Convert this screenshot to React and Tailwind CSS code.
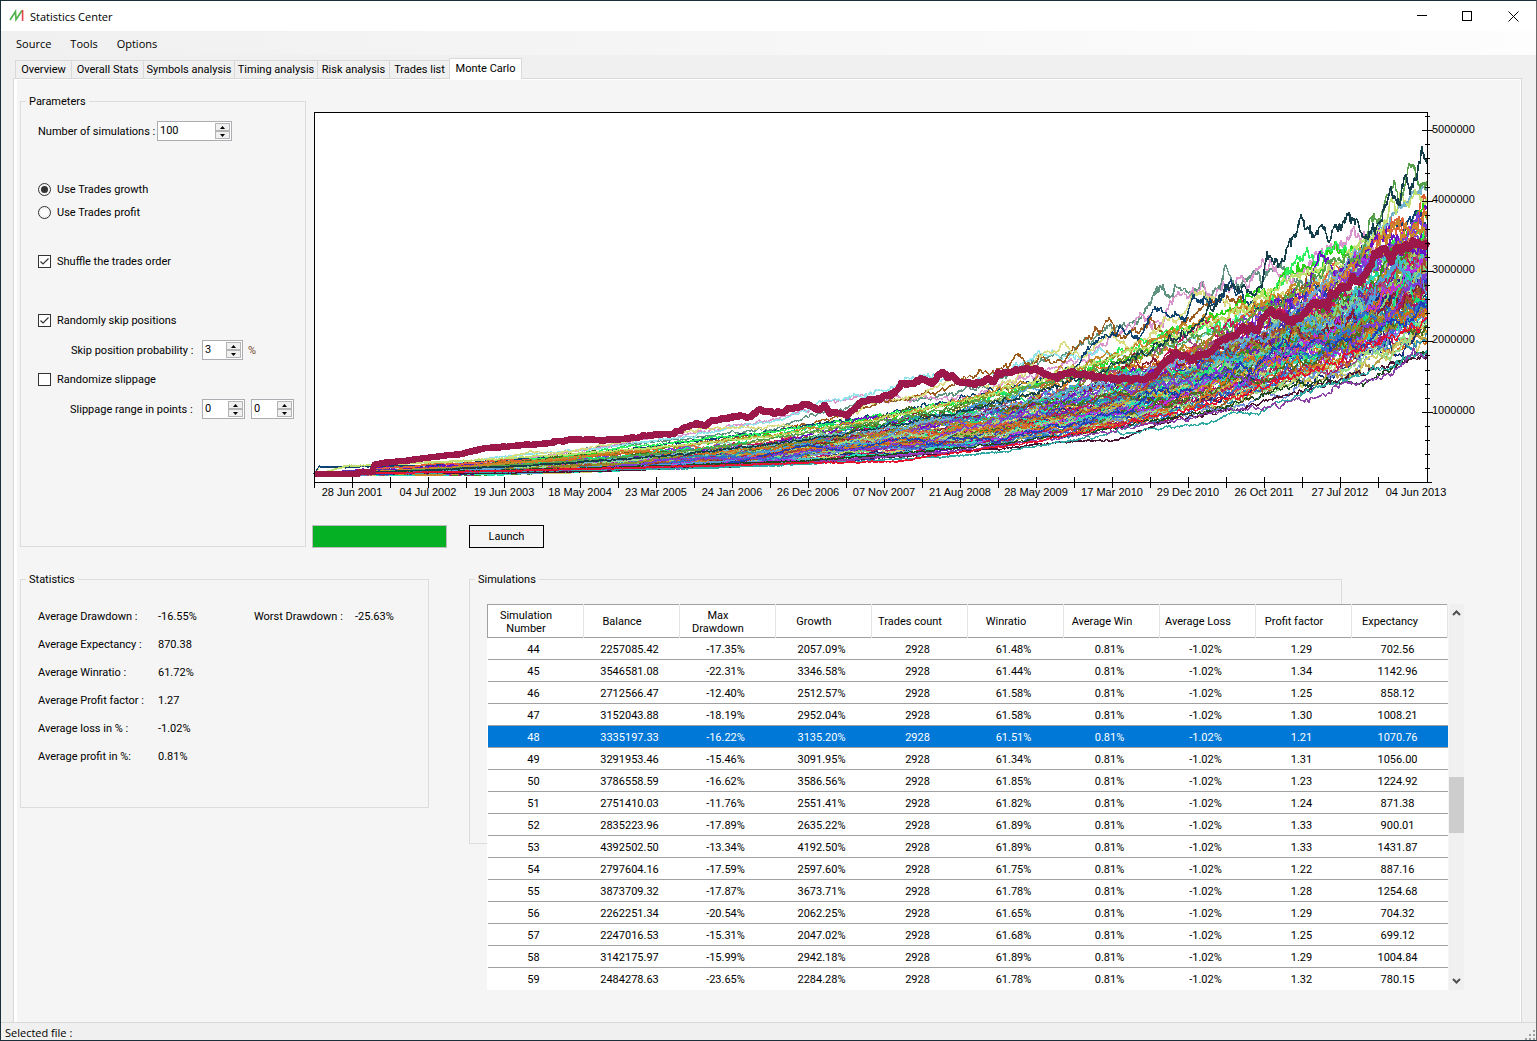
// src/pages/StatisticsCenter.jsx
// Statistics window, Monte Carlo tab

import { useMemo, useState } from "react";

const MENUS = ["Source", "Tools", "Options"];

const TABS = [
  { name: "Overview", width: "w-[57px]" },
  { name: "Overall Stats", width: "w-[73px]" },
  { name: "Symbols analysis", width: "w-[92px]" },
  { name: "Timing analysis", width: "w-[84px]" },
  { name: "Risk analysis", width: "w-[73px]" },
  { name: "Trades list", width: "w-[61px]" },
  { name: "Monte Carlo", width: "w-[73px]" },
];

const COLUMNS = [
  "Simulation Number",
  "Balance",
  "Max Drawdown",
  "Growth",
  "Trades count",
  "Winratio",
  "Average Win",
  "Average Loss",
  "Profit factor",
  "Expectancy",
];

const SIMULATIONS = [
  [44, "2257085.42", "-17.35%", "2057.09%", "61.48%", "1.29", "702.56"],
  [45, "3546581.08", "-22.31%", "3346.58%", "61.44%", "1.34", "1142.96"],
  [46, "2712566.47", "-12.40%", "2512.57%", "61.58%", "1.25", "858.12"],
  [47, "3152043.88", "-18.19%", "2952.04%", "61.58%", "1.30", "1008.21"],
  [48, "3335197.33", "-16.22%", "3135.20%", "61.51%", "1.21", "1070.76"],
  [49, "3291953.46", "-15.46%", "3091.95%", "61.34%", "1.31", "1056.00"],
  [50, "3786558.59", "-16.62%", "3586.56%", "61.85%", "1.23", "1224.92"],
  [51, "2751410.03", "-11.76%", "2551.41%", "61.82%", "1.24", "871.38"],
  [52, "2835223.96", "-17.89%", "2635.22%", "61.89%", "1.33", "900.01"],
  [53, "4392502.50", "-13.34%", "4192.50%", "61.89%", "1.33", "1431.87"],
  [54, "2797604.16", "-17.59%", "2597.60%", "61.75%", "1.22", "887.16"],
  [55, "3873709.32", "-17.87%", "3673.71%", "61.78%", "1.28", "1254.68"],
  [56, "2262251.34", "-20.54%", "2062.25%", "61.65%", "1.29", "704.32"],
  [57, "2247016.53", "-15.31%", "2047.02%", "61.68%", "1.25", "699.12"],
  [58, "3142175.97", "-15.99%", "2942.18%", "61.89%", "1.29", "1004.84"],
  [59, "2484278.63", "-23.65%", "2284.28%", "61.78%", "1.32", "780.15"],
];

const STATISTICS = [
  ["Average Drawdown :", "-16.55%", "Worst Drawdown :", "-25.63%"],
  ["Average Expectancy :", "870.38"],
  ["Average Winratio :", "61.72%"],
  ["Average Profit factor :", "1.27"],
  ["Average loss in % :", "-1.02%"],
  ["Average profit in %:", "0.81%"],
];

const DATES = [
  "28 Jun 2001",
  "04 Jul 2002",
  "19 Jun 2003",
  "18 May 2004",
  "23 Mar 2005",
  "24 Jan 2006",
  "26 Dec 2006",
  "07 Nov 2007",
  "21 Aug 2008",
  "28 May 2009",
  "17 Mar 2010",
  "29 Dec 2010",
  "26 Oct 2011",
  "27 Jul 2012",
  "04 Jun 2013",
];

// ─── Equity curves ───────────────────────────────────────────────

const LEFT = 314;
const RIGHT = 1427;
const BASE = 482;
// samples per pixel column
const DENSITY = 2;
const STEPS = (RIGHT - LEFT) * DENSITY;

// Runs that leave the pack, as [x, y] points
const OUTLIERS = [
  { color: "#5f927f", points: [[314, 474], [600, 447], [733, 433], [767, 430], [808, 417], [867, 402], [907, 400], [960, 392], [1000, 380], [1040, 360], [1067, 352], [1087, 342], [1113, 330], [1140, 317], [1148, 303], [1157, 290], [1167, 295], [1178, 287], [1190, 292], [1203, 283], [1208, 297], [1220, 287], [1227, 267], [1233, 285], [1247, 283], [1263, 278], [1280, 260], [1287, 273], [1310, 285], [1363, 262], [1427, 255]] },
  { color: "#d993cd", points: [[314, 474], [500, 461], [640, 440], [700, 433], [750, 423], [770, 420], [808, 411], [833, 400], [860, 398], [880, 400], [967, 397], [1047, 370], [1087, 357], [1120, 332], [1143, 315], [1163, 323], [1177, 297], [1203, 285], [1213, 295], [1240, 283], [1263, 262], [1280, 273], [1293, 280], [1313, 263], [1333, 247], [1352, 232], [1363, 240], [1380, 253], [1427, 243]] },
  { color: "#8fe3ea", points: [[314, 474], [500, 457], [600, 448], [700, 434], [767, 422], [800, 413], [823, 402], [850, 398], [880, 392], [913, 377], [930, 373], [943, 380], [973, 382], [1007, 370], [1037, 355], [1053, 352], [1073, 357], [1100, 352], [1130, 358], [1200, 335], [1300, 290], [1380, 262], [1427, 235]] },
  { color: "#9c5b1c", points: [[314, 474], [500, 464], [700, 443], [833, 418], [887, 400], [940, 390], [980, 373], [1000, 370], [1020, 355], [1030, 363], [1040, 357], [1063, 362], [1080, 342], [1097, 335], [1112, 322], [1123, 338], [1153, 320], [1170, 337], [1190, 317], [1220, 297], [1262, 312], [1313, 277], [1340, 300], [1427, 260]] },
  { color: "#d9dc7e", points: [[314, 474], [320, 467], [500, 459], [530, 452], [560, 453], [600, 446], [670, 433], [727, 427], [800, 427], [833, 423], [867, 403], [917, 397], [953, 377], [1000, 388], [1047, 353], [1065, 345], [1083, 357], [1097, 343], [1112, 332], [1123, 345], [1147, 338], [1167, 318], [1180, 320], [1193, 300], [1227, 300], [1237, 313], [1263, 293], [1293, 292], [1360, 262], [1427, 240]] },
  { color: "#0f4372", points: [[314, 474], [319, 467], [420, 466], [700, 440], [900, 411], [1073, 370], [1087, 350], [1113, 330], [1140, 337], [1158, 307], [1167, 313], [1183, 317], [1193, 298], [1203, 305], [1227, 288], [1240, 296], [1262, 310], [1327, 287], [1350, 262], [1380, 233], [1400, 217], [1427, 217]] },
  { color: "#2ad414", points: [[314, 474], [600, 453], [830, 426], [1040, 384], [1140, 353], [1170, 337], [1213, 317], [1247, 297], [1267, 293], [1297, 267], [1320, 267], [1337, 247], [1357, 260], [1380, 254], [1410, 236], [1423, 208], [1427, 212]] },
  { color: "#2df05f", points: [[314, 474], [620, 448], [850, 421], [1060, 378], [1173, 330], [1227, 325], [1270, 297], [1297, 260], [1307, 248], [1317, 263], [1345, 240], [1357, 257], [1390, 250], [1427, 227]] },
  { color: "#c8892b", points: [[314, 474], [620, 452], [850, 423], [1060, 372], [1173, 331], [1270, 302], [1340, 276], [1387, 232], [1400, 220], [1412, 232], [1427, 222]] },
  { color: "#72b2cc", points: [[314, 474], [800, 440], [1100, 383], [1263, 333], [1320, 290], [1350, 262], [1373, 227], [1385, 230], [1393, 213], [1400, 207], [1413, 200], [1427, 192]] },
  { color: "#bfe06e", points: [[314, 474], [346, 466], [420, 463], [800, 432], [1100, 361], [1220, 320], [1290, 282], [1367, 243], [1387, 217], [1392, 197], [1397, 210], [1402, 193], [1407, 203], [1413, 192], [1427, 197]] },
  { color: "#56a04c", points: [[314, 474], [800, 434], [1100, 368], [1263, 312], [1337, 263], [1360, 253], [1372, 215], [1382, 223], [1390, 200], [1395, 188], [1400, 197], [1408, 175], [1413, 173], [1420, 180], [1427, 170]] },
  { color: "#153f4b", points: [[314, 474], [800, 440], [1100, 372], [1187, 333], [1227, 292], [1253, 290], [1262, 282], [1267, 258], [1283, 257], [1293, 233], [1307, 225], [1313, 233], [1322, 227], [1330, 235], [1343, 225], [1351, 217], [1365, 242], [1382, 217], [1395, 185], [1400, 197], [1406, 177], [1410, 188], [1417, 170], [1422, 148], [1427, 167]] },
  { color: "#1d4a1d", points: [[314, 474], [800, 461], [1100, 430], [1230, 405], [1297, 383], [1363, 382], [1393, 363], [1413, 355], [1427, 353]] },
  { color: "#4a1233", points: [[314, 474], [560, 472], [800, 463], [970, 451], [1080, 440], [1113, 442], [1133, 435], [1150, 428], [1173, 420], [1230, 410], [1330, 382], [1400, 362], [1427, 356]] },
  { color: "#2fa7a2", points: [[314, 474], [700, 468], [933, 457], [973, 455], [1033, 447], [1113, 433], [1137, 432], [1167, 427], [1190, 426], [1220, 420], [1233, 412], [1260, 413], [1267, 407], [1283, 400], [1330, 384], [1427, 350]] },
  { color: "#8a3fa8", points: [[314, 474], [800, 463], [1100, 432], [1230, 410], [1280, 407], [1297, 395], [1310, 402], [1337, 387], [1380, 377], [1400, 370], [1408, 358], [1427, 352]] },
  { color: "#e6102f", points: [[314, 474], [800, 463], [900, 461], [930, 456], [1100, 428], [1300, 375], [1427, 320]] },
];

// The run picked in the table
const SELECTED_POINTS = [
  [314, 474], [358, 474], [360, 472], [373, 472], [374, 465], [388, 462], [413, 460], [433, 457],
  [467, 453], [483, 448], [507, 446], [540, 444], [580, 439], [600, 441], [620, 439], [657, 434],
  [673, 434], [687, 426], [707, 424], [713, 420], [733, 416], [750, 417], [758, 410], [780, 413],
  [800, 406], [808, 404], [815, 409], [825, 407], [830, 413], [847, 415], [863, 402], [883, 397],
  [895, 392], [903, 384], [913, 383], [920, 378], [932, 383], [942, 373], [952, 375], [962, 383],
  [975, 385], [983, 381], [995, 380], [998, 374], [1010, 372], [1040, 368], [1050, 377], [1070, 373],
  [1087, 374], [1093, 377], [1113, 378], [1143, 380], [1157, 375], [1163, 363], [1177, 355], [1190, 359],
  [1210, 352], [1223, 340], [1237, 335], [1243, 328], [1258, 331], [1263, 318], [1272, 309], [1287, 319],
  [1300, 317], [1313, 303], [1328, 303], [1333, 290], [1348, 288], [1353, 280], [1363, 278], [1373, 257],
  [1383, 253], [1393, 258], [1400, 250], [1413, 244], [1427, 247],
];

const PALETTE = [
  "#1f3fb8", "#6a13c4", "#2f6fc9", "#3fc1c9", "#c8892b", "#3d8f1d", "#b01a5b", "#7a3fd1", "#23e0b4", "#8c8c2a",
  "#5b2fa8", "#96dc8c", "#d0d06a", "#b52fe0", "#1b2f7a", "#e0603a", "#4fa0d8", "#7fd67f", "#a0522d", "#9b4f7f",
  "#14e07a", "#c2185b", "#6f8fd8", "#d0701a", "#80c8b0", "#4b6b1f", "#b5b35e", "#2c8fb0", "#b8a04a", "#8a1f2f",
];

function createRandom(seed) {
  let s = seed;
  return () => {
    s = (s * 1664525 + 1013904223) % 4294967296;
    return s / 4294967296;
  };
}

function normal(random) {
  return Math.sqrt(-2 * Math.log(1 - random())) * Math.cos(2 * Math.PI * random());
}

function toPath(ys) {
  return ys.map((y, i) => `${i ? "L" : "M"}${LEFT + Math.floor(i / DENSITY)} ${Math.round(y)}`).join("");
}

// Same trades in another order: the walk is tied to its end point
function randomCurve(random) {
  const end = Math.log(28) + 0.2 * normal(random) - 0.06;
  const walk = [0];
  for (let i = 1; i <= STEPS; i++) walk.push(walk[i - 1] + (0.56 * normal(random)) / Math.sqrt(STEPS));
  return walk.map((w, i) => (i / STEPS) * end + (w - (i / STEPS) * walk[STEPS]));
}

function staysInPack(growth) {
  return growth.every((g, i) => {
    const t = i / STEPS;
    const gap = g - t * Math.log(28);
    return gap < 0.75 - 0.33 * t && gap > 0.2 * t - 0.65;
  });
}

function packCurve(random) {
  let growth = randomCurve(random);
  while (!staysInPack(growth)) growth = randomCurve(random);
  return growth.map((g) => BASE - 7.3 * Math.exp(Math.max(g, 0.02)));
}

function pointCurve(points, random, amount) {
  const ys = [];
  let k = 0;
  let noise = 0;
  for (let i = 0; i <= STEPS; i++) {
    const x = LEFT + i / DENSITY;
    while (k < points.length - 2 && x > points[k + 1][0]) k++;
    const [x0, y0] = points[k];
    const [x1, y1] = points[k + 1];
    const f = (x - x0) / (x1 - x0);
    const height = Math.exp(Math.log(BASE - y0) * (1 - f) + Math.log(BASE - y1) * f);
    noise = noise * 0.85 + normal(random) * amount;
    ys.push(BASE - height * (1 + noise));
  }
  return ys;
}

function EquityChart() {
  const { curves, selected } = useMemo(() => {
    const random = createRandom(48);
    const pack = Array.from({ length: 92 }, (_, i) => ({
      color: PALETTE[(i * 7) % PALETTE.length],
      path: toPath(packCurve(random)),
    }));
    const outliers = OUTLIERS.map((o) => ({
      color: o.color,
      path: toPath(pointCurve(o.points, random, 0.01)),
    }));
    return {
      curves: [...outliers.slice(0, 8), ...pack, ...outliers.slice(8)],
      selected: toPath(pointCurve(SELECTED_POINTS, random, 0.006)),
    };
  }, []);

  return (
    <svg
      viewBox="312 112 1168 388"
      className="block w-full max-w-[1168px]"
      role="img"
      aria-label="Simulated balance"
    >
      <rect x="314.5" y="112.5" width="1113" height="370" fill="#fff" stroke="#000" />
      <g fill="none" shapeRendering="crispEdges" strokeLinejoin="round">
        {curves.map((c, i) => (
          <path key={i} d={c.path} stroke={c.color} strokeWidth="1.3" />
        ))}
        <path d={selected} stroke="#9c174a" strokeWidth="6" />
      </g>
      <path d="M1427.5 112V482.5H1432M314.5 112V487" stroke="#000" fill="none" />
      <g fontFamily="'Liberation Sans', sans-serif" fontSize="11">
        {Array.from({ length: 29 }, (_, i) => (
          <path key={i} d={`M${314.5 + i * 38} 477V488`} stroke="#000" />
        ))}
        {DATES.map((date, i) => (
          <text key={date} x={352 + i * 76} y="496" textAnchor="middle">
            {date}
          </text>
        ))}
        {Array.from({ length: 26 }, (_, i) => {
          const y = Math.round(468 - i * 14.07) + 0.5;
          const major = i % 5 === 4;
          return <path key={i} d={major ? `M1422 ${y}H1433` : `M1425 ${y}H1430`} stroke="#000" />;
        })}
        {[1, 2, 3, 4, 5].map((m) => (
          <text key={m} x="1432" y={Math.round(484 - m * 70.3)}>
            {m * 1000000}
          </text>
        ))}
      </g>
    </svg>
  );
}

// ─── Small controls ──────────────────────────────────────────────

function Logo() {
  return (
    <svg className="h-4 w-4" viewBox="0 0 16 16" fill="none" strokeWidth="1.6" aria-hidden="true">
      <path d="M1 12L6.500 3.500L7 11.500L13 2.500" stroke="#4fb04a" />
      <path d="M13.600 2V13" stroke="#e5484d" />
    </svg>
  );
}

function Spinner({ id, label, value, width }) {
  const [number, setNumber] = useState(value);
  return (
    <div className={`flex h-5 border border-[#abadb3] bg-white p-px ${width}`}>
      <input
        id={id}
        aria-label={label}
        value={number}
        onChange={(e) => setNumber(Number(e.target.value) || 0)}
        className="w-0 min-w-0 flex-1 pl-px leading-4 outline-none"
      />
      <div className="flex w-[15px] flex-col">
        <button
          type="button"
          aria-label="Increase"
          onClick={() => setNumber(number + 1)}
          className="flex flex-1 items-center justify-center border border-[#b4b4b4] bg-[#f0f0f0]"
        >
          <svg className="h-[3px] w-[5px]" viewBox="0 0 5 3">
            <path d="M0 3L2.500 0L5 3Z" />
          </svg>
        </button>
        <button
          type="button"
          aria-label="Decrease"
          onClick={() => setNumber(Math.max(0, number - 1))}
          className="flex flex-1 items-center justify-center border border-[#b4b4b4] bg-[#f0f0f0]"
        >
          <svg className="h-[3px] w-[5px]" viewBox="0 0 5 3">
            <path d="M0 0L2.500 3L5 0Z" />
          </svg>
        </button>
      </div>
    </div>
  );
}

function Radio({ label, checked, onChange }) {
  return (
    <label className="flex h-5 items-center gap-[6px]">
      <input
        type="radio"
        name="mode"
        checked={checked}
        onChange={onChange}
        className="h-[13px] w-[13px] appearance-none rounded-full border border-[#333] bg-white bg-clip-content p-[2px] checked:bg-[#333]"
      />
      {label}
    </label>
  );
}

function CheckBox({ label, defaultChecked }) {
  const [checked, setChecked] = useState(defaultChecked);
  return (
    <label className="flex h-5 items-center gap-[6px]">
      <span className="grid h-[13px] w-[13px]">
        <input
          type="checkbox"
          checked={checked}
          onChange={() => setChecked(!checked)}
          className="col-start-1 row-start-1 h-[13px] w-[13px] appearance-none border border-[#333] bg-white"
        />
        {checked && (
          <svg className="pointer-events-none col-start-1 row-start-1" viewBox="0 0 13 13" fill="none">
            <path d="M2.500 6.500L5 9L10.500 3.500" stroke="#333" strokeWidth="1.2" />
          </svg>
        )}
      </span>
      {label}
    </label>
  );
}

function GroupBox({ title, className, children }) {
  return (
    <fieldset className={`min-w-0 border border-[#dcdcdc] pl-[17px] ${className}`}>
      <legend className="-ml-3 px-[3px] pt-[2px] leading-3">{title}</legend>
      {children}
    </fieldset>
  );
}

// ─── Sections ────────────────────────────────────────────────────

function TitleBar() {
  return (
    <header className="flex h-[30px] items-center bg-white pl-2 font-['Open_Sans',sans-serif] text-[11px]">
      <Logo />
      <h1 className="ml-[5px] flex-1">Statistics Center</h1>
      <button type="button" aria-label="Minimize" className="flex h-full w-[45px] items-center justify-center">
        <svg className="h-[11px] w-[11px]" viewBox="0 0 11 11" stroke="#000" fill="none">
          <path d="M0 4.500H10" />
        </svg>
      </button>
      <button type="button" aria-label="Maximize" className="flex h-full w-[45px] items-center justify-center">
        <svg className="h-[11px] w-[11px]" viewBox="0 0 11 11" stroke="#000" fill="none">
          <path d="M0.500 0.500H9.500V9.500H0.500Z" shapeRendering="crispEdges" />
        </svg>
      </button>
      <button type="button" aria-label="Close" className="flex h-full w-[46px] items-center justify-center">
        <svg className="h-[11px] w-[11px]" viewBox="0 0 11 11" stroke="#000" fill="none">
          <path d="M0.500 0.500L10.500 10.500M10.500 0.500L0.500 10.500" />
        </svg>
      </button>
    </header>
  );
}

function Parameters() {
  const [mode, setMode] = useState("growth");
  return (
    <GroupBox title="Parameters" className="h-[453px] w-[286px] shrink-0">
      <div className="mt-[13px] flex h-5 items-center">
        <label htmlFor="simulations" className="w-[119px]">
          Number of simulations :
        </label>
        <Spinner id="simulations" value={100} width="w-[75px]" />
      </div>
      <div className="mt-[38px]">
        <Radio label="Use Trades growth" checked={mode === "growth"} onChange={() => setMode("growth")} />
      </div>
      <div className="mt-[3px]">
        <Radio label="Use Trades profit" checked={mode === "profit"} onChange={() => setMode("profit")} />
      </div>
      <div className="mt-[29px]">
        <CheckBox label="Shuffle the trades order" defaultChecked />
      </div>
      <div className="mt-[39px]">
        <CheckBox label="Randomly skip positions" defaultChecked />
      </div>
      <div className="mt-[10px] flex h-5 items-center pl-[33px]">
        <label htmlFor="skip" className="w-[131px]">
          Skip position probability :
        </label>
        <Spinner id="skip" value={3} width="w-[41px]" />
        <span className="ml-[5px] text-[#7a4a2a]">%</span>
      </div>
      <div className="mt-[9px]">
        <CheckBox label="Randomize slippage" defaultChecked={false} />
      </div>
      <div className="mt-[10px] flex h-5 items-center pl-8">
        <label htmlFor="slippage-from" className="w-[132px]">
          Slippage range in points :
        </label>
        <Spinner id="slippage-from" value={0} width="w-[43px]" />
        <div className="ml-[6px]">
          <Spinner id="slippage-to" label="Slippage range end" value={0} width="w-[43px]" />
        </div>
      </div>
    </GroupBox>
  );
}

function Statistics() {
  return (
    <GroupBox title="Statistics" className="h-[236px] w-[409px] shrink-0">
      <dl className="mt-4">
        {STATISTICS.map(([label, value, label2, value2]) => (
          <div key={label} className="flex h-7 items-center">
            <dt className="w-[120px]">{label}</dt>
            <dd className="w-24">{value}</dd>
            {label2 && <dt className="w-[101px]">{label2}</dt>}
            {value2 && <dd>{value2}</dd>}
          </div>
        ))}
      </dl>
    </GroupBox>
  );
}

function SimulationTable() {
  const [selected, setSelected] = useState(48);
  return (
    <div className="flex w-[977px]">
      <table className="w-[961px] table-fixed border-collapse bg-white text-center">
        <thead>
          <tr className="h-[33px] border-y border-l border-[#a0a0a0]">
            {COLUMNS.map((c) => (
              <th key={c} className="border-r border-r-[#e5e5e5] pt-px pr-5 pl-px leading-[13px] font-normal">
                {c}
              </th>
            ))}
          </tr>
        </thead>
        <tbody>
          {SIMULATIONS.map(([id, balance, drawdown, growth, winratio, factor, expectancy]) => (
            <tr
              key={id}
              onClick={() => setSelected(id)}
              className={`h-[22px] border-b border-[#a0a0a0] last:border-b-0 *:pt-px *:pr-1 ${
                selected === id ? "bg-[#0078d7] text-white" : ""
              }`}
            >
              <td>{id}</td>
              <td>{balance}</td>
              <td>{drawdown}</td>
              <td>{growth}</td>
              <td>2928</td>
              <td>{winratio}</td>
              <td>0.81%</td>
              <td>-1.02%</td>
              <td>{factor}</td>
              <td>{expectancy}</td>
            </tr>
          ))}
        </tbody>
      </table>
      <div className="ml-px flex w-[15px] flex-col items-center bg-[#f0f0f0]">
        <button type="button" aria-label="Scroll up" className="flex h-[17px] w-full items-center justify-center">
          <svg className="h-[6px] w-[9px]" viewBox="0 0 9 6" fill="none" stroke="#505050" strokeWidth="2">
            <path d="M1 5L4.500 1.500L8 5" />
          </svg>
        </button>
        <div className="mt-[156px] h-14 w-full bg-[#cdcdcd]" />
        <button type="button" aria-label="Scroll down" className="mt-auto flex h-[17px] w-full items-center justify-center">
          <svg className="h-[6px] w-[9px]" viewBox="0 0 9 6" fill="none" stroke="#505050" strokeWidth="2">
            <path d="M1 1L4.500 4.500L8 1" />
          </svg>
        </button>
      </div>
    </div>
  );
}

export default function App() {
  const [tab, setTab] = useState("Monte Carlo");

  return (
    <div className="flex min-h-screen flex-col border border-[#1b2f3a] border-r-[#6b6b6b] bg-[#f0f0f0] font-[Roboto,sans-serif] text-[11px] leading-[15px] text-black">
      <TitleBar />

      <nav className="flex h-6 items-center gap-[19px] bg-linear-to-r from-[#f0f0f0] to-[#fdfdfd] pl-[15px] font-['Open_Sans',sans-serif] text-[11px]">
        {MENUS.map((m) => (
          <button key={m} type="button">
            {m}
          </button>
        ))}
      </nav>

      <div className="flex h-[23px] items-end pl-[14px]" role="tablist">
        {TABS.map(({ name, width }) => (
          <button
            key={name}
            type="button"
            role="tab"
            aria-selected={tab === name}
            onClick={() => setTab(name)}
            className={`-mr-px border border-b-0 border-[#d9d9d9] whitespace-nowrap ${width} ${
              tab === name ? "z-10 -mb-px h-[21px] bg-white pb-[2px]" : "h-[18px]"
            }`}
          >
            {name}
          </button>
        ))}
      </div>

      <main className="mr-[14px] ml-3 flex flex-1 border border-b-0 border-[#d9d9d9]">
        <div className="min-w-0 flex-1 border-t border-r border-l-3 border-white bg-[#f5f5f5] pt-[14px] pl-[3px]">
          <div className="flex gap-[6px]">
            <Parameters />
            <div className="min-w-0 flex-1 pt-[18px]">
              <EquityChart />
              <div className="mt-[25px] flex gap-[22px]">
                <div
                  role="progressbar"
                  aria-valuenow={100}
                  className="h-[23px] w-[135px] border border-[#bcbcbc] bg-[#06b025]"
                />
                <button type="button" className="h-[23px] w-[75px] border border-black">
                  Launch
                </button>
              </div>
            </div>
          </div>

          <div className="mt-6 flex items-start gap-10">
            <Statistics />
            <GroupBox title="Simulations" className="h-[272px] w-[873px] pt-[18px]">
              <SimulationTable />
            </GroupBox>
          </div>
        </div>
      </main>

      <footer className="flex h-[18px] items-end justify-between border-t border-[#d9d9d9] pl-1 font-['Open_Sans',sans-serif] text-[11px]">
        <span>Selected file :</span>
        <svg className="h-[11px] w-[11px]" viewBox="0 0 11 11" fill="#a0a0a0" aria-hidden="true">
          <path d="M8 1h2v2h-2zM8 5h2v2h-2zM4 5h2v2h-2zM8 9h2v2h-2zM4 9h2v2h-2zM0 9h2v2h-2z" />
        </svg>
      </footer>
    </div>
  );
}
